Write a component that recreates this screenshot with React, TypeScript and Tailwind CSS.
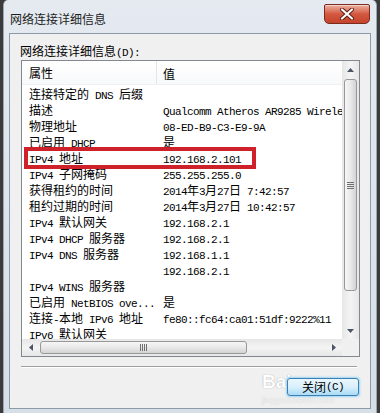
import React from "react";

function T({ s }: { s: string }) {
  const parts = s.split(/([\x00-\x7f]+)/).filter(Boolean);
  return (
    <>
      {parts.map((p, i) =>
        /^[\x00-\x7f]+$/.test(p) ? (
          <span key={i} className="font-['Liberation_Mono',monospace] text-[11px] tracking-[-0.6px]">
            {p}
          </span>
        ) : (
          <span key={i} className="font-['Noto_Sans_CJK_SC','Noto_Sans_CJK_JP',sans-serif] text-[12px]">
            {p}
          </span>
        )
      )}
    </>
  );
}

const rows: [string, string][] = [
  ["连接特定的 DNS 后缀", ""],
  ["描述", "Qualcomm Atheros AR9285 Wireless Network Adapter"],
  ["物理地址", "08-ED-B9-C3-E9-9A"],
  ["已启用 DHCP", "是"],
  ["IPv4 地址", "192.168.2.101"],
  ["IPv4 子网掩码", "255.255.255.0"],
  ["获得租约的时间", "2014年3月27日 7:42:57"],
  ["租约过期的时间", "2014年3月27日 10:42:57"],
  ["IPv4 默认网关", "192.168.2.1"],
  ["IPv4 DHCP 服务器", "192.168.2.1"],
  ["IPv4 DNS 服务器", "192.168.1.1"],
  ["", "192.168.2.1"],
  ["IPv4 WINS 服务器", ""],
  ["已启用 NetBIOS ove...", "是"],
  ["连接-本地 IPv6 地址", "fe80::fc64:ca01:51df:9222%11"],
  ["IPv6 默认网关", ""],
];

function Tri({ dir }: { dir: "up" | "down" | "left" | "right" }) {
  const pts: Record<string, string> = {
    up: "0,4 3.5,0 7,4",
    down: "0,0 3.5,4 7,0",
    left: "4,0 0,3.5 4,7",
    right: "0,0 4,3.5 0,7",
  };
  const vert = dir === "up" || dir === "down";
  return (
    <svg width={vert ? 7 : 4} height={vert ? 4 : 7} viewBox={vert ? "0 0 7 4" : "0 0 4 7"}>
      <polygon points={pts[dir]} fill="#4b5566" />
    </svg>
  );
}

export default function App() {
  return (
    <div className="w-[380px] h-[413px] bg-[#3b3b3b] px-[3px] overflow-hidden">
      <div className="relative h-full flex flex-col bg-gradient-to-b from-[#e4eaf0] to-[#d6dee7] rounded-t-[5px] border-l border-r border-[#9aa6b2]">
        {/* title bar */}
        <div className="h-[33px] flex items-start justify-between shrink-0">
          <div className="pl-[6px] pt-[10px] leading-[16px] whitespace-pre text-[#1e1e1e]">
            <T s="网络连接详细信息" />
          </div>
          <div className="mt-[4px] mr-[6px] w-[46px] h-[20px] rounded-b-[5px] rounded-t-[2px] border border-[#7b2a20] bg-gradient-to-b from-[#eab0a2] via-[#d3583f] to-[#c4432c] flex items-center justify-center shadow-[inset_0_1px_0_rgba(255,255,255,0.5)]">
            <svg width="14" height="12" viewBox="0 0 14 12">
              <path d="M2 1.5 L12 10.5 M12 1.5 L2 10.5" stroke="#5a1a12" strokeWidth="4" strokeLinecap="round" />
              <path d="M2 1.5 L12 10.5 M12 1.5 L2 10.5" stroke="#ffffff" strokeWidth="2.2" strokeLinecap="round" />
            </svg>
          </div>
        </div>

        {/* inner panel */}
        <div className="relative mx-[5px] mb-[4px] flex-1 border border-[#8d9aa8] bg-[#f0f0f0] flex flex-col">
          <div className="mt-[8px] pl-[10px] h-[16px] leading-[16px] whitespace-pre text-black">
            <T s="网络连接详细信息(D):" />
          </div>

          {/* list box */}
          <div className="mt-[2px] ml-[11px] w-[339px] h-[297px] border border-[#828790] bg-white grid grid-cols-[1fr_17px] grid-rows-[1fr_17px]">
            <div className="relative overflow-hidden">
              <div className="h-[24px] flex items-center border-b border-[#eef0f3] bg-gradient-to-b from-white to-[#f8f9fa] text-black whitespace-pre">
                <div className="w-[135px] h-full flex items-center pl-[7px] border-r border-[#e3e5e8]">
                  <T s="属性" />
                </div>
                <div className="pl-[6px]">
                  <T s="值" />
                </div>
              </div>
              {rows.map(([k, v], i) => (
                <div key={i} className="h-[16px] leading-[16px] flex whitespace-pre text-black">
                  <div className="w-[135px] shrink-0 pl-[7px] overflow-hidden">
                    <T s={k} />
                  </div>
                  <div className="pl-[6px] shrink-0">
                    <T s={v} />
                  </div>
                </div>
              ))}
              <div className="absolute left-[2px] top-[86px] w-[232px] h-[22px] border-[4px] border-[#cf2129]" />
            </div>

            {/* vertical scrollbar */}
            <div className="flex flex-col bg-gradient-to-r from-[#e6e6e6] via-[#f4f4f4] to-[#e6e6e6]">
              <div className="h-[17px] flex items-center justify-center">
                <Tri dir="up" />
              </div>
              <div className="flex-1 px-[2px]">
                <div className="mt-[1px] h-[212px] rounded-[3px] border border-[#989898] bg-gradient-to-r from-[#f6f6f6] via-[#e9e9e9] to-[#d3d3d3] flex flex-col items-center justify-center gap-[1px]">
                  <div className="w-[7px] h-px bg-[#6f6f6f]" />
                  <div className="w-[7px] h-px bg-[#6f6f6f]" />
                  <div className="w-[7px] h-px bg-[#6f6f6f]" />
                  <div className="w-[7px] h-px bg-[#6f6f6f]" />
                </div>
              </div>
              <div className="h-[17px] flex items-center justify-center">
                <Tri dir="down" />
              </div>
            </div>

            {/* horizontal scrollbar */}
            <div className="flex bg-gradient-to-b from-[#e6e6e6] via-[#f4f4f4] to-[#e6e6e6]">
              <div className="w-[17px] flex items-center justify-center">
                <Tri dir="left" />
              </div>
              <div className="flex-1 py-[2px]">
                <div className="ml-[1px] w-[207px] h-full rounded-[3px] border border-[#989898] bg-gradient-to-b from-[#f6f6f6] via-[#e9e9e9] to-[#d3d3d3] flex items-center justify-center gap-[1px]">
                  <div className="h-[7px] w-px bg-[#6f6f6f]" />
                  <div className="h-[7px] w-px bg-[#6f6f6f]" />
                  <div className="h-[7px] w-px bg-[#6f6f6f]" />
                  <div className="h-[7px] w-px bg-[#6f6f6f]" />
                </div>
              </div>
              <div className="w-[17px] flex items-center justify-center">
                <Tri dir="right" />
              </div>
            </div>
            <div className="bg-[#f0f0f0]" />
          </div>

          {/* separator */}
          <div className="mt-[9px] ml-[11px] w-[336px] h-px bg-[#a0a0a0]" />
          <div className="ml-[11px] w-[336px] h-px bg-white" />

          {/* watermark (under the button) */}
          <div className="pointer-events-none absolute left-[252px] top-[338px] flex flex-col items-start">
            <div className="font-['Liberation_Sans',sans-serif] font-bold text-[19px] leading-[20px] text-white [text-shadow:0_0_1px_#8e8e8e]">
              Bai
            </div>
            <div className="mt-[3px] font-['Liberation_Sans',sans-serif] text-[9px] leading-[11px] text-[#fafafa] [text-shadow:0_0_1px_#b8b8b8]">
              jingyan.baidu.com
            </div>
          </div>

          {/* button */}
          <div className="relative mt-[10px] flex justify-end pr-[11px]">
            <div className="w-[72px] h-[18px] rounded-[3px] border border-[#3c7fb1] bg-gradient-to-b from-[#eaf6fd] via-[#d9f0fc] to-[#a9dbf6] shadow-[0_0_2px_1px_#9cd6f5] flex items-center justify-center leading-[16px] whitespace-pre text-black">
              <T s="关闭(C)" />
            </div>
          </div>
        </div>
      </div>
    </div>
  );
}
